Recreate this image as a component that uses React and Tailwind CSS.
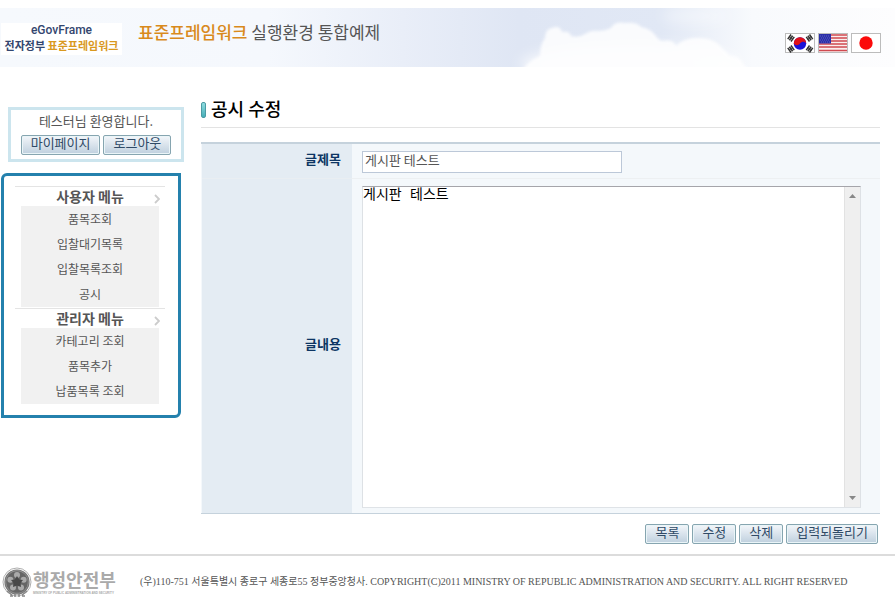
import React from "react";

const menus = [
  { title: "사용자 메뉴", items: ["품목조회", "입찰대기목록", "입찰목록조회", "공시"] },
  { title: "관리자 메뉴", items: ["카테고리 조회", "품목추가", "납품목록 조회"] },
];

function Button({ children }) {
  return (
    <button
      type="button"
      className="flex h-5 items-center rounded-[2px] border border-[#86a5b0] bg-linear-to-b from-[#f3f6fa] to-[#bfd0de] px-[9px] pb-1 text-[13px] leading-4 whitespace-nowrap text-[#2f4a66] shadow-[inset_0_0_0_1px_#eaf5f8]"
    >
      {children}
    </button>
  );
}

function Trigram({ x, y, angle }) {
  return (
    <g transform={`translate(${x} ${y}) rotate(${angle})`} stroke="#333" strokeWidth="1.5">
      <path d="M-2.8-2h5.6M-2.8 0h5.6M-2.8 2h5.6" />
      <path d="M0-2.5v5" strokeWidth="0.7" />
    </g>
  );
}

function KoreaFlag() {
  return (
    <svg width="30" height="20" viewBox="0 0 30 20" className="block">
      <rect x="0.5" y="0.5" width="29" height="19" fill="#fff" stroke="#bcbcbc" />
      <circle cx="15" cy="10.5" r="6.2" fill="#1a12d8" />
      <path d="M8.8 10.5a6.2 6.2 0 0 1 12.4 0c-1-2.2-4.6-2.4-6.2 0s-4.8 2.2-6.2 0z" fill="#e01018" />
      <Trigram x={6} y={5} angle={-54} />
      <Trigram x={24.5} y={5} angle={54} />
      <Trigram x={6} y={16} angle={54} />
      <Trigram x={24.5} y={16} angle={-54} />
    </svg>
  );
}

function UsaFlag() {
  return (
    <svg width="30" height="20" viewBox="0 0 30 20" className="block">
      <rect x="0.5" y="0.5" width="29" height="19" fill="#fbeeee" stroke="#bcbcbc" />
      <path d="M1 2h28M1 5h28M1 8h28M1 11h28M1 14h28M1 17.500h28" stroke="#d04a50" strokeWidth="1.6" />
      <rect x="1" y="1" width="12" height="9.500" fill="#2b2fa8" />
      <path d="M2 3h10M3 5h10M2 7h10M3 9h10" stroke="#6c70c8" strokeWidth="0.8" strokeDasharray="1 1" />
    </svg>
  );
}

function JapanFlag() {
  return (
    <svg width="30" height="20" viewBox="0 0 30 20" className="block">
      <rect x="0.5" y="0.5" width="29" height="19" fill="#fff" stroke="#bcbcbc" />
      <circle cx="15" cy="10" r="6.700" fill="#fb0a0a" />
    </svg>
  );
}

function Clouds() {
  return (
    <svg className="absolute top-0 right-0 h-full w-[395px]" viewBox="0 0 395 59" aria-hidden="true">
      <defs>
        <filter id="soft" x="-10%" y="-20%" width="120%" height="140%">
          <feGaussianBlur stdDeviation="1.5" />
        </filter>
        <filter id="softer" x="-20%" y="-40%" width="140%" height="180%">
          <feGaussianBlur stdDeviation="6" />
        </filter>
      </defs>
      <g fill="#fff" filter="url(#softer)">
        <ellipse cx="195" cy="8" rx="34" ry="7" opacity="0.35" />
        <ellipse cx="130" cy="56" rx="110" ry="20" opacity="0.6" />
      </g>
      <path
        filter="url(#soft)"
        fill="#fff"
        opacity="0.85"
        d="M22 62q8-10 18-14q0-12 5-18q0-9 7-10q8-3 10 4q8-1 9 4q8 2 14-2q6-4 12-3q8 0 14-3q4-7 14-5q12-1 16 4q10 2 14 8q4 6 8 6q10-2 13 5q8-8 20-8q14-1 22 6q6 6 12 12q10 0 13 8q4 4 6 6z"
      />
    </svg>
  );
}

function MinistryEmblem() {
  return (
    <svg width="31" height="31" viewBox="0 0 31 31" className="block shrink-0" aria-hidden="true">
      <circle cx="15" cy="15" r="14" fill="#fff" stroke="#999" strokeWidth="0.8" />
      <circle cx="15" cy="15" r="12" fill="#999" stroke="#777" strokeWidth="1.200" />
      <circle cx="15" cy="15" r="10.800" fill="#666" />
      <g fill="#aaa">
        <circle cx="15" cy="8" r="3" />
        <circle cx="21.600" cy="12.700" r="3" />
        <circle cx="19" cy="20.500" r="3" />
        <circle cx="11" cy="20.500" r="3" />
        <circle cx="8.400" cy="12.700" r="3" />
      </g>
      <path d="M15 9l2 3.500 4 .5-2.500 3 .5 4-4-1.500-4 1.500.5-4L9 13l4-.5z" fill="#484848" />
      <path d="M5 24l5 4M25 24l-5 4M8 29h3M13 27v4M17 27v4M20 29h3" stroke="#888" strokeWidth="1.500" />
    </svg>
  );
}

function Header() {
  return (
    <header className="relative mt-2 flex h-[59px] items-start bg-[linear-gradient(to_right,#f6f9fd_0%,#f5f8fd_30%,#e9eef8_45%,#dfe6f4_58%,#e1e8f5_74%,#f8fafd_84%,#fdfdfe_100%)]">
      <Clouds />
      <a
        href="#"
        className="relative mt-[15px] ml-px flex h-8 w-[121px] shrink-0 flex-col items-center bg-white text-[11px] leading-[15px] font-bold whitespace-nowrap text-[#33466f]"
      >
        <span className="font-['Roboto',sans-serif] text-xs leading-[15px] font-medium">eGovFrame</span>
        <span>
          전자정부 <span className="text-[#d9991f]">표준프레임워크</span>
        </span>
      </a>
      <h1 className="relative mt-3 ml-4 text-[17px] leading-6 font-normal whitespace-nowrap text-[#555]">
        <span className="font-medium text-[#d98a1c]">표준프레임워크</span> 실행환경 통합예제
      </h1>
      <nav aria-label="언어" className="relative mt-[25px] mr-3.5 ml-auto flex gap-[3px]">
        <a href="#" aria-label="한국어"><KoreaFlag /></a>
        <a href="#" aria-label="English"><UsaFlag /></a>
        <a href="#" aria-label="日本語"><JapanFlag /></a>
      </nav>
    </header>
  );
}

function Sidebar() {
  return (
    <aside className="w-[184px] shrink-0 pt-10 text-[#555]">
      <section className="ml-2 border-[3px] border-[#cce5ee] pb-1">
        <p className="text-center text-[13px] leading-[22px]">테스터님 환영합니다.</p>
        <div className="flex justify-center gap-[3px] pt-[3px]">
          <Button>마이페이지</Button>
          <Button>로그아웃</Button>
        </div>
      </section>
      <nav className="mt-[11px] mr-[3px] ml-px rounded-tl-md rounded-br-md border-[3px] border-[#2481ad] pt-2.5 pr-[13px] pb-2.5 pl-[11px]">
        {menus.map((menu) => (
          <section key={menu.title}>
            <h2 className="relative border-t border-[#e4e4e4] text-center text-sm leading-[19px] font-bold">
              {menu.title}
              <svg className="absolute top-[7px] right-[5px]" width="6" height="10" viewBox="0 0 6 10">
                <path d="M1 1l4 4-4 4" fill="none" stroke="#ccc" strokeWidth="1.800" />
              </svg>
            </h2>
            <ul className="mx-1.5 mb-px bg-[#f1f1f1] pb-px text-center text-xs leading-[25px]">
              {menu.items.map((item) => (
                <li key={item}>
                  <a href="#">{item}</a>
                </li>
              ))}
            </ul>
          </section>
        ))}
      </nav>
    </aside>
  );
}

function EditForm() {
  return (
    <main className="min-w-0 flex-1 pt-7 pr-[15px] pl-[17px]">
      <h2 className="flex items-center gap-[5px] border-b border-[#e3e3e3] pb-1.5 text-lg leading-[26px] font-medium text-black">
        <span className="mt-1 h-4 w-[5px] rounded-[2px] border border-[#4b9aa3] bg-linear-to-b from-[#8fdde0] to-[#45aeb8]" />
        공시 수정
      </h2>
      <form onSubmit={(event) => event.preventDefault()}>
        <div className="mt-3.5 grid grid-cols-[151px_minmax(0,1fr)] border-t-2 border-b border-t-[#c5d2dc] border-b-[#c5d2dc] bg-[#f4f8fb]">
          <label
            htmlFor="title"
            className="ml-px border-b border-[#e9eef2] bg-[#e4ecf3] pt-[5px] pr-[11px] text-right text-[13px] leading-5 font-bold text-[#0c3563]"
          >
            글제목
          </label>
          <div className="h-[35px] border-b border-[#edf0f2] pt-[7px] pl-2.5">
            <input
              id="title"
              type="text"
              defaultValue="게시판 테스트"
              className="block h-[22px] w-[260px] border border-[#bcc8d8] bg-white px-0.5 pb-1.5 text-[13px] leading-4 text-[#555] outline-none"
            />
          </div>
          <label
            htmlFor="content"
            className="ml-px flex items-center justify-end bg-[#e4ecf3] pr-[11px] pb-1 text-[13px] leading-5 font-bold text-[#0c3563]"
          >
            글내용
          </label>
          <div className="pt-[7px] pr-[19px] pb-[5px] pl-2.5">
            <div className="flex h-[322px] border border-t-[#a5a5aa] border-r-[#dde1e5] border-b-[#dfe3e7] border-l-[#dde1e5] bg-white">
              <textarea
                id="content"
                defaultValue="게시판 테스트"
                className="block min-w-0 flex-1 resize-none overflow-hidden font-['Liberation_Mono','Noto_Sans_CJK_KR',monospace] text-sm leading-4 text-black outline-none"
              />
              <div
                className="flex w-4 flex-col items-center justify-between border-l border-[#e2e2e2] bg-[#efefef] py-1.5"
                aria-hidden="true"
              >
                <svg width="7" height="5" viewBox="0 0 7 5"><path d="M0 5l3.500-4L7 5z" fill="#888" /></svg>
                <svg width="7" height="5" viewBox="0 0 7 5"><path d="M0 0h7L3.500 4z" fill="#888" /></svg>
              </div>
            </div>
          </div>
        </div>
        <div className="mt-2.5 mr-0.5 flex justify-end gap-[3px]">
          <Button>목록</Button>
          <Button>수정</Button>
          <Button>삭제</Button>
          <Button>입력되돌리기</Button>
        </div>
      </form>
    </main>
  );
}

function Footer() {
  return (
    <footer className="mt-2.5 flex items-start border-t-2 border-[#dcdcdc] pt-2.5">
      <div className="flex w-[140px] shrink-0 items-start pt-px pl-0.5">
        <MinistryEmblem />
        <div className="whitespace-nowrap text-[#aaa]">
          <p className="text-lg leading-6 font-bold">행정안전부</p>
          <p className="font-['Liberation_Sans',sans-serif] text-[3px] leading-1 font-bold">
            MINISTRY OF PUBLIC ADMINISTRATION AND SECURITY
          </p>
        </div>
      </div>
      <p className="pt-2 font-['Liberation_Serif','Noto_Sans_CJK_KR',serif] text-[10px] leading-4 whitespace-nowrap text-[#555]">
        (우)110-751 서울특별시 종로구 세종로55 정부중앙청사. COPYRIGHT(C)2011 MINISTRY OF REPUBLIC ADMINISTRATION AND
        SECURITY. ALL RIGHT RESERVED
      </p>
    </footer>
  );
}

export default function App() {
  return (
    <div className="flow-root overflow-hidden bg-white font-['Noto_Sans_CJK_KR',sans-serif]">
      <Header />
      <div className="flex items-start">
        <Sidebar />
        <EditForm />
      </div>
      <Footer />
    </div>
  );
}
